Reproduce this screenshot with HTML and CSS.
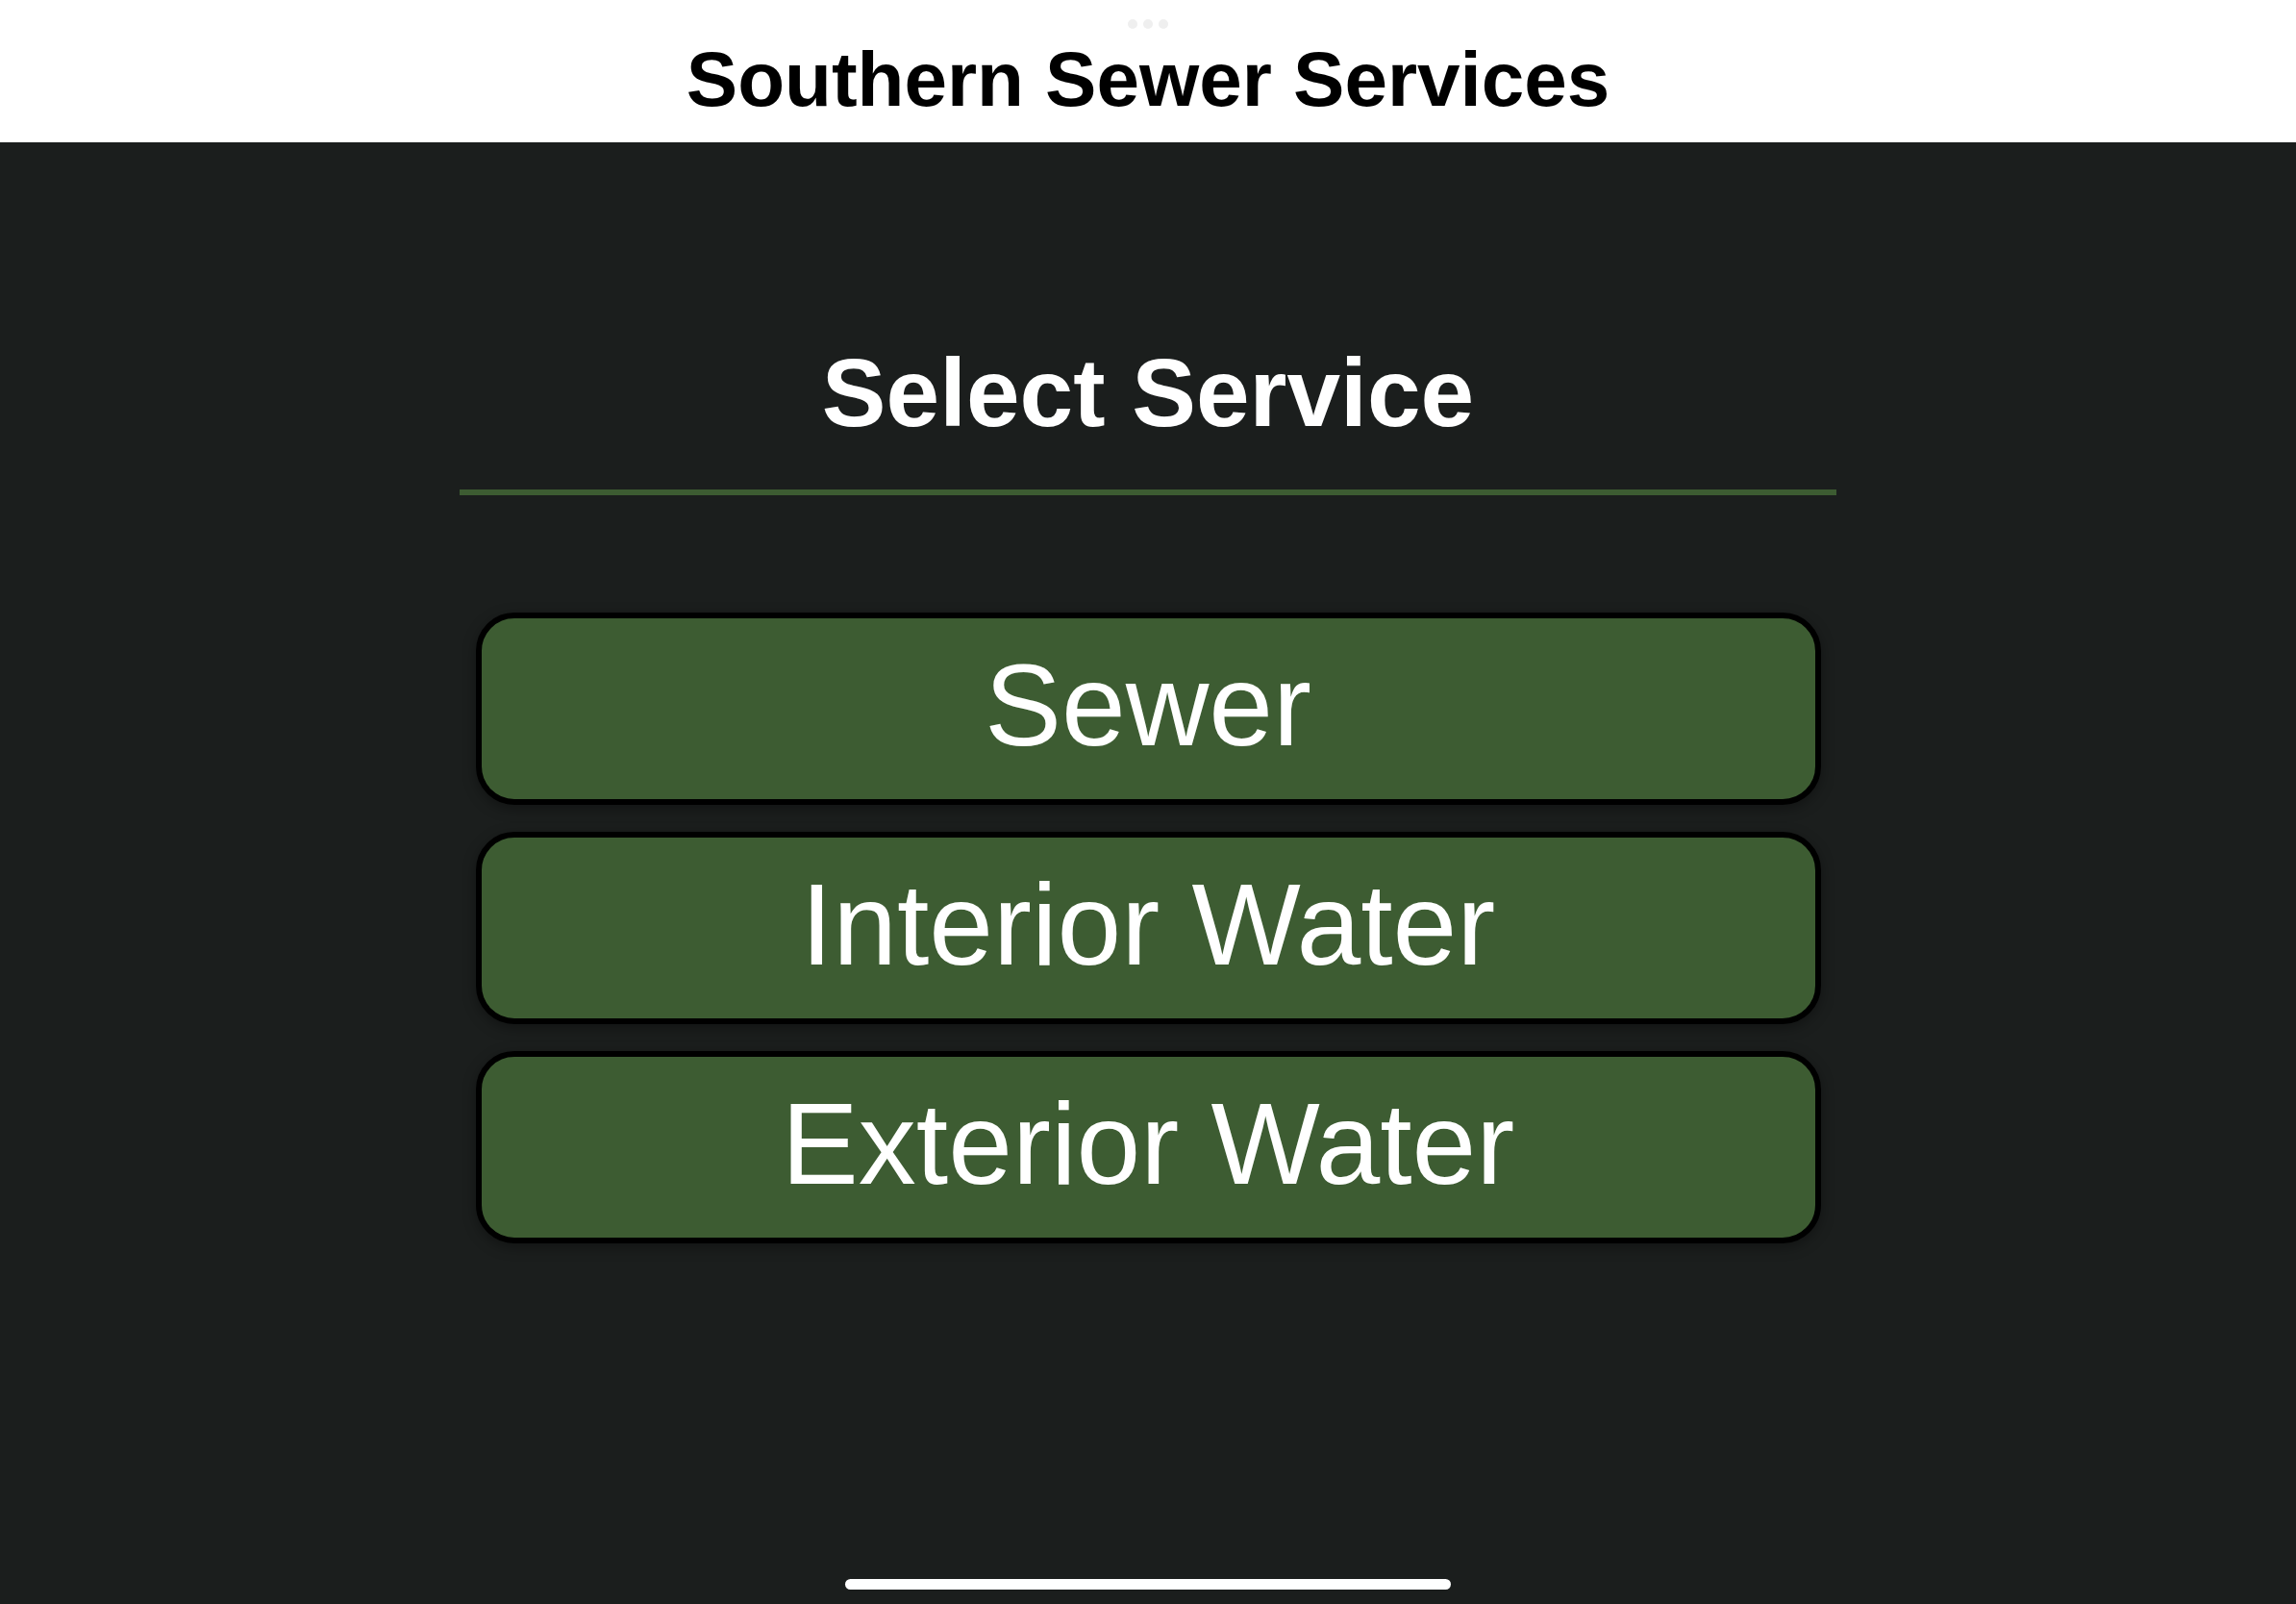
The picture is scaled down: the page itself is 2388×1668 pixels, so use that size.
FILE: index.html
```html
<!DOCTYPE html>
<html lang="en">
<head>
<meta charset="utf-8">
<title>Southern Sewer Services</title>
<link rel="stylesheet" href="styles.css">
</head>
<body>
<header class="topbar">
  <div class="grabber"><span></span><span></span><span></span></div>
  <h1 class="app-title">Southern Sewer Services</h1>
</header>
<main class="screen">
  <h2 class="screen-title">Select Service</h2>
  <div class="divider"></div>
  <div class="service-list">
    <button class="service-btn">Sewer</button>
    <button class="service-btn">Interior Water</button>
    <button class="service-btn">Exterior Water</button>
  </div>
</main>
<div class="home-indicator"></div>
</body>
</html>
```

FILE: styles.css
```css
* { box-sizing: border-box; }
html, body {
  margin: 0;
  padding: 0;
  width: 2388px;
  height: 1668px;
  overflow: hidden;
}
body {
  background: #1b1e1d;
  font-family: "Liberation Sans", Arial, Helvetica, sans-serif;
  position: relative;
}
.topbar {
  position: relative;
  height: 148px;
  background: #ffffff;
  display: flex;
  justify-content: center;
  padding-top: 43px;
}
.grabber {
  position: absolute;
  top: 20px;
  left: 50%;
  transform: translateX(-50%);
  display: flex;
  gap: 6px;
}
.grabber span {
  width: 10px;
  height: 10px;
  border-radius: 50%;
  background: #efefef;
}
.app-title {
  margin: 0;
  font-size: 80px;
  line-height: 80px;
  font-weight: 700;
  color: #000000;
}
.screen {
  display: flex;
  flex-direction: column;
  align-items: center;
  padding-top: 210px;
}
.screen-title {
  margin: 0;
  font-size: 100px;
  line-height: 100px;
  font-weight: 700;
  color: #ffffff;
}
.divider {
  width: 1432px;
  height: 6px;
  margin-top: 51px;
  background: #3d5c32;
}
.service-list {
  margin-top: 122px;
  display: flex;
  flex-direction: column;
  gap: 28px;
}
.service-btn {
  width: 1399px;
  height: 200px;
  border: 6px solid #000000;
  border-radius: 40px;
  background: #3d5c32;
  color: #ffffff;
  font-family: "Liberation Sans", Arial, Helvetica, sans-serif;
  font-size: 120px;
  font-weight: 400;
  display: flex;
  align-items: center;
  justify-content: center;
  padding: 0 0 9px 0;
  box-shadow: 0 4px 14px rgba(0, 0, 0, 0.35);
  cursor: pointer;
}
.home-indicator {
  position: absolute;
  left: 879px;
  top: 1642px;
  width: 630px;
  height: 11px;
  border-radius: 6px;
  background: #ffffff;
}
```
